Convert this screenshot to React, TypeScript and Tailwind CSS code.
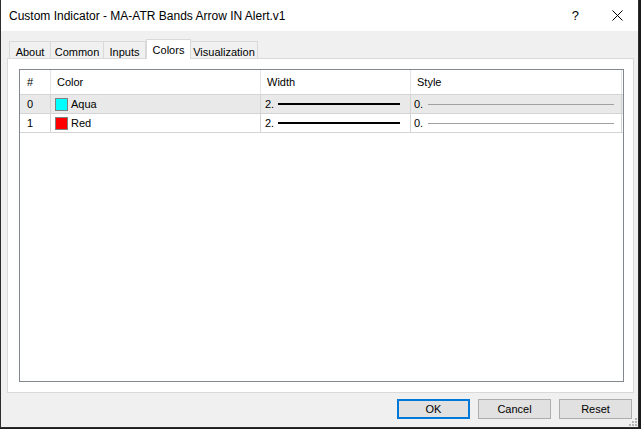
import React from "react";

const font = { fontFamily: '"Liberation Sans", Arial, sans-serif' };

function Tab({ label, w, selected, first, last }: { label: string; w: number; selected?: boolean; first?: boolean; last?: boolean }) {
  if (selected) {
    return (
      <div
        className="relative z-10 -mb-[1px] h-[20px] bg-white border-t border-l border-r border-[#d9d9d9] flex items-start justify-center pt-[2px] text-[11px] text-black"
        style={{ width: w }}
      >
        {label}
      </div>
    );
  }
  return (
    <div
      className={
        "h-[17px] bg-[#f0f0f0] border-t border-[#d9d9d9] flex items-start justify-center pt-[2px] text-[11px] text-black " +
        (first ? "border-l " : "") +
        (last ? "border-r " : "border-r ")
      }
      style={{ width: w }}
    >
      {label}
    </div>
  );
}

function Row({ idx, name, color, shaded }: { idx: string; name: string; color: string; shaded?: boolean }) {
  return (
    <div className={"flex h-[19px] border-b border-[#d4d4d4] text-[11px] text-black " + (shaded ? "bg-[#e9e9e9]" : "bg-white")}>
      <div className="w-[31px] border-r border-[#d4d4d4] pl-[7px] flex items-center">{idx}</div>
      <div className="w-[210px] border-r border-[#d4d4d4] pl-[4px] flex items-center gap-[3px]">
        <div className="w-[13px] h-[13px] border border-[#808080]" style={{ backgroundColor: color }} />
        <span>{name}</span>
      </div>
      <div className="w-[150px] border-r border-[#d4d4d4] pl-[4px] flex items-center">
        <span className="w-[13px]">2.</span>
        <div className="w-[122px] h-[2px] bg-black" />
      </div>
      <div className="w-[211px] border-r border-[#d4d4d4] pl-[3px] flex items-center">
        <span className="w-[14px]">0.</span>
        <div className="w-[186px] h-[1px] bg-[#a0a0a0]" />
      </div>
    </div>
  );
}

export default function App() {
  return (
    <div className="w-[641px] h-[429px] bg-[#1b1b1b] overflow-hidden" style={font}>
      <div className="relative w-[639px] h-[428px] border-l border-r border-b border-[#2d2d2d] bg-[#f0f0f0] flex flex-col">
        {/* Title bar */}
        <div className="h-[31px] bg-white flex items-center justify-between pl-[8px]">
          <span className="text-[12px] text-black">Custom Indicator - MA-ATR Bands Arrow IN Alert.v1</span>
          <div className="flex items-center h-full">
            <span className="text-[13px] text-black mr-[33px]">?</span>
            <svg width="11" height="11" viewBox="0 0 11 11" className="mr-[15px]">
              <path d="M0.5 0.5 L10.5 10.5 M10.5 0.5 L0.5 10.5" stroke="#000" strokeWidth="1" />
            </svg>
          </div>
        </div>

        {/* Body */}
        <div className="flex flex-col pl-[6px] pt-[8px]">
          <div className="flex items-end h-[19px] pl-[2px]">
            <Tab label="About" w={42} first />
            <Tab label="Common" w={53} />
            <Tab label="Inputs" w={42} />
            <Tab label="Colors" w={45} selected />
            <Tab label="Visualization" w={67} last />
          </div>
          <div className="w-[627px] h-[335px] bg-white border border-[#d9d9d9] pl-[11px] pt-[10px]">
            <div className="w-[605px] h-[313px] border border-[#828790] bg-white">
              <div className="flex h-[25px] border-b border-[#d4d4d4] text-[11px] text-black">
                <div className="w-[31px] border-r border-[#e5e5e5] pl-[7px] flex items-center">#</div>
                <div className="w-[210px] border-r border-[#e5e5e5] pl-[6px] flex items-center">Color</div>
                <div className="w-[150px] border-r border-[#e5e5e5] pl-[6px] flex items-center">Width</div>
                <div className="w-[211px] border-r border-[#e5e5e5] pl-[6px] flex items-center">Style</div>
              </div>
              <Row idx="0" name="Aqua" color="#00ffff" shaded />
              <Row idx="1" name="Red" color="#ff0000" />
            </div>
          </div>
          <div className="flex justify-end gap-[8px] pr-[6px] mt-[6px]">
            <button className="w-[73px] h-[20px] bg-[#e1e1e1] border-2 border-[#0078d7] text-[11px] text-black flex items-center justify-center">OK</button>
            <button className="w-[73px] h-[20px] bg-[#e1e1e1] border border-[#adadad] text-[11px] text-black flex items-center justify-center">Cancel</button>
            <button className="w-[73px] h-[20px] bg-[#e1e1e1] border border-[#adadad] text-[11px] text-black flex items-center justify-center">Reset</button>
          </div>
        </div>

        {/* Resize grip */}
        <svg width="10" height="10" viewBox="0 0 10 10" className="absolute right-[1px] bottom-[1px]">
          <rect x="8" y="2" width="2" height="2" fill="#b4b4b4" />
          <rect x="5" y="5" width="2" height="2" fill="#b4b4b4" />
          <rect x="8" y="5" width="2" height="2" fill="#b4b4b4" />
          <rect x="2" y="8" width="2" height="2" fill="#b4b4b4" />
          <rect x="5" y="8" width="2" height="2" fill="#b4b4b4" />
          <rect x="8" y="8" width="2" height="2" fill="#b4b4b4" />
        </svg>
      </div>
    </div>
  );
}
